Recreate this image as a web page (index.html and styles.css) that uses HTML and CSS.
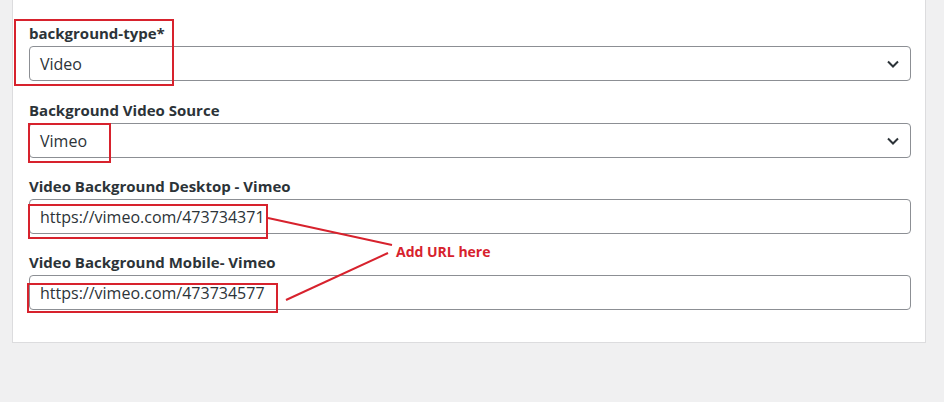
FILE: index.html
```html
<!DOCTYPE html>
<html lang="en">
<head>
<meta charset="utf-8">
<title>Background settings</title>
<link rel="stylesheet" href="styles.css">
</head>
<body>
<div class="page">
  <div class="panel">
    <div class="field">
      <label class="label">background-type*</label>
      <div class="control select"><span class="value">Video</span><svg class="chev" width="12" height="8" viewBox="0 0 12 8"><path d="M1 1.5 L6 6.5 L11 1.5" fill="none" stroke="#2c3338" stroke-width="2"/></svg></div>
    </div>
    <div class="field">
      <label class="label">Background Video Source</label>
      <div class="control select"><span class="value">Vimeo</span><svg class="chev" width="12" height="8" viewBox="0 0 12 8"><path d="M1 1.5 L6 6.5 L11 1.5" fill="none" stroke="#2c3338" stroke-width="2"/></svg></div>
    </div>
    <div class="field">
      <label class="label">Video Background Desktop - Vimeo</label>
      <div class="control"><span class="value">https://vimeo.com/473734371</span></div>
    </div>
    <div class="field">
      <label class="label">Video Background Mobile- Vimeo</label>
      <div class="control"><span class="value">https://vimeo.com/473734577</span></div>
    </div>
  </div>
</div>
<svg class="annot" width="944" height="402" viewBox="0 0 944 402">
  <g fill="none" stroke="#d7222d" stroke-width="2">
    <rect x="15" y="20" width="158" height="65"/>
    <rect x="29" y="124" width="81" height="38"/>
    <rect x="29" y="205" width="238" height="33"/>
    <rect x="28" y="284" width="249" height="28"/>
    <line x1="268" y1="218" x2="392" y2="245"/>
    <line x1="286" y1="300" x2="388" y2="253"/>
  </g>
</svg>
<div class="note">Add URL here</div>
</body>
</html>
```
FILE: styles.css
```css
html, body {
  margin: 0;
  padding: 0;
  background: #f0f0f1;
  font-family: "Open Sans", "Noto Sans", sans-serif;
}
.page {
  width: 944px;
  height: 402px;
  padding-left: 12px;
  box-sizing: border-box;
}
.panel {
  width: 914px;
  box-sizing: border-box;
  background: #fff;
  border: 1px solid #dcdcde;
  border-top: none;
  padding: 23px 14px 32px 16px;
}
.field {
  display: flex;
  flex-direction: column;
}
.field + .field {
  margin-top: 18px;
}
.field:nth-child(2) {
  margin-top: 19px;
}
.label {
  font-size: 15px;
  line-height: 20px;
  font-weight: 700;
  color: #2c3338;
  margin-bottom: 3px;
}
.control {
  height: 35px;
  box-sizing: border-box;
  border: 1px solid #8c8f94;
  border-radius: 4px;
  display: flex;
  align-items: center;
  justify-content: space-between;
  padding: 0 10px;
  font-size: 16px;
  color: #2c3338;
}
.chev {
  display: block;
  margin-right: 1px;
}
.annot {
  position: absolute;
  left: 0;
  top: 0;
  pointer-events: none;
}
.note {
  position: absolute;
  left: 396px;
  top: 243px;
  font-size: 14px;
  line-height: 18px;
  font-weight: 700;
  color: #d7222d;
}
```
